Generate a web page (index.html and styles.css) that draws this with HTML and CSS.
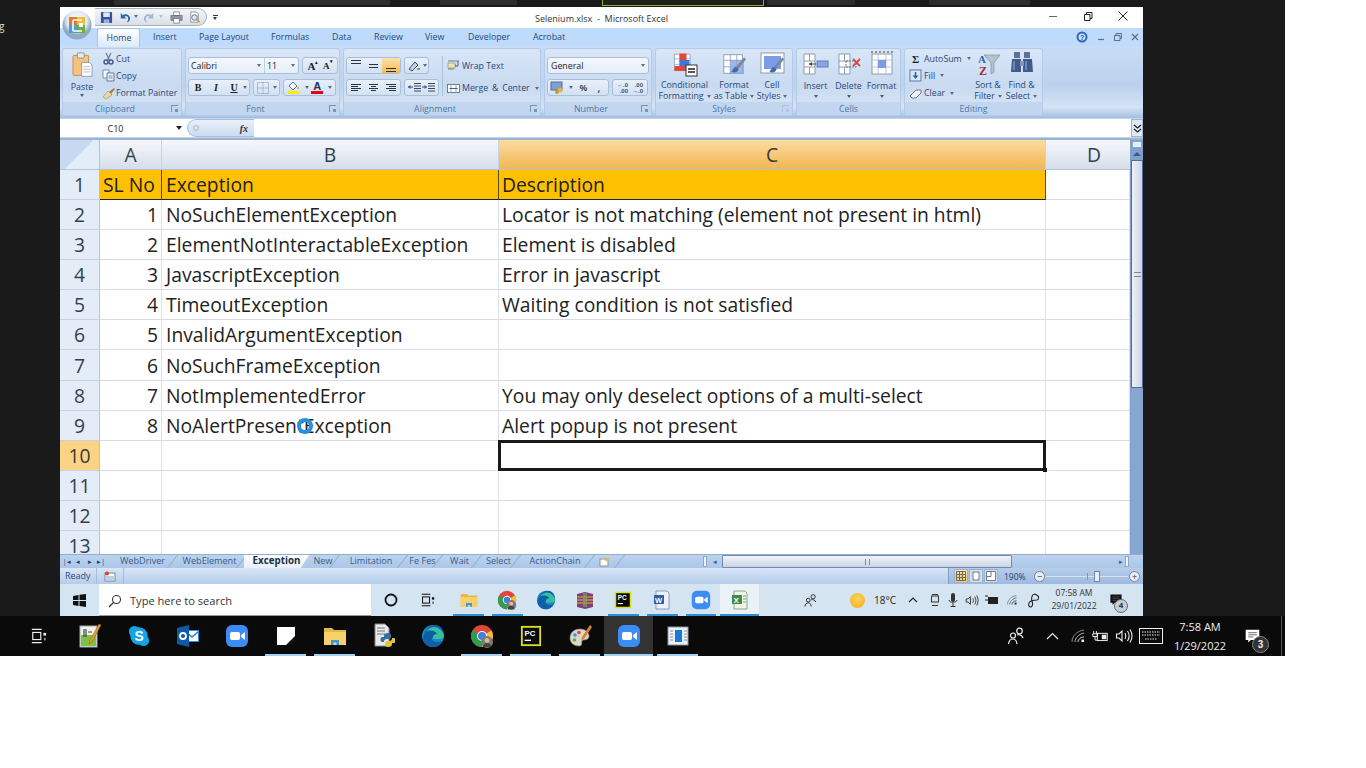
FILE: index.html
```html
<!DOCTYPE html>
<html lang="en">
<head>
<meta charset="utf-8">
<title>Selenium.xlsx - Microsoft Excel</title>
<link rel="stylesheet" href="styles.css">
</head>
<body>
<svg class="sprite" aria-hidden="true">
  <symbol id="zoom" viewBox="0 0 24 24"><rect x="1" y="1" width="22" height="22" rx="6" fill="#3b8cf5"/><rect x="5" y="8" width="10" height="8" rx="2" fill="#fff"/><path d="M16 11l4-3v8l-4-3z" fill="#fff"/></symbol>
  <symbol id="chrome" viewBox="0 0 24 24"><circle cx="12" cy="12" r="11" fill="#e0483a"/><path d="M12 12L2.500 6.500A11 11 0 0 0 12 23z" fill="#2f9e4a"/><path d="M12 12l9.500-5.500A11 11 0 0 1 12 23z" fill="#f5c22e"/><circle cx="12" cy="12" r="5" fill="#fff"/><circle cx="12" cy="12" r="4" fill="#3f7fe0"/><circle cx="17" cy="18" r="6" fill="#7d7a75"/><circle cx="17" cy="16.500" r="2.400" fill="#d9b8a0"/><path d="M13 23c0-3 2-4 4-4s4 1 4 4z" fill="#444"/></symbol>
  <symbol id="edge" viewBox="0 0 24 24"><circle cx="12" cy="12" r="11" fill="#1d86c9"/><path d="M2 14C3 6 9 1 14 1c5 0 9 4 9 10 0 2-1 3-3 3H11c0 3 3 4 6 4 2 0 3-1 4-1-2 4-5 6-9 6C6 23 2 19 2 14z" fill="#0e5fa8"/><path d="M5 8c3-5 8-6 12-4 4 2 6 6 6 8 0 2-2 3-4 3h-7c-1 0 0-1 0-2 0-2 2-3 4-3-1-3-7-5-11-2z" fill="#35c1a0"/></symbol>
  <symbol id="folder" viewBox="0 0 24 24"><path d="M1 4h8l2 2h12v15H1z" fill="#e6b84a"/><rect x="1" y="8" width="22" height="13" fill="#f7d26b"/><path d="M8 21v-5h8v5h-2.500v-2.500h-3V21z" fill="#3a96dd"/></symbol>
  <symbol id="pycharm" viewBox="0 0 24 24"><rect x="1" y="1" width="22" height="22" fill="#d8e021"/><rect x="3" y="3" width="18" height="18" fill="#0b0b0b"/><text x="5" y="12" font-size="8.500" font-weight="700" fill="#fff" font-family="Liberation Sans, sans-serif">PC</text><rect x="5" y="16" width="7" height="1.500" fill="#fff"/></symbol>
  <symbol id="people" viewBox="0 0 20 20"><g fill="none" stroke="currentColor" stroke-width="1.200"><circle cx="7" cy="9.500" r="2.500"/><path d="M2.500 18c.4-3 2-5 4.500-5 2 0 3.500 1.500 4 5"/><circle cx="13.500" cy="5" r="2.800"/><path d="M11 9c2-.5 5 0 6 3"/></g></symbol>
  <symbol id="wifi" viewBox="0 0 16 16"><g fill="none" stroke="currentColor"><path d="M2 14C2 8 7 3 14 2" opacity=".55"/><path d="M5 14c0-4 4-8 9-9" opacity=".75"/><path d="M8 14c0-2 2-5 6-5"/></g><rect x="11.500" y="11.500" width="2.500" height="2.500" fill="currentColor"/></symbol>
  <symbol id="speaker" viewBox="0 0 18 16"><g fill="none" stroke="currentColor" stroke-width="1.100"><path d="M1.500 6v4h2.500l3 3V3L4 6z"/><path d="M10 5c1 2 1 4 0 6M12.500 3c2 3 2 7 0 10M15 1.500c2.500 4 2.500 9 0 13"/></g></symbol>
  <symbol id="battery" viewBox="0 0 20 14"><g fill="none" stroke="currentColor" stroke-width="1.100"><rect x="7" y="3.500" width="11" height="8"/><path d="M3 1v3M6 1v3M2 4h5v3H2zM4.500 7v4h3"/></g><rect x="12" y="5" width="5" height="5" fill="currentColor"/></symbol>
  <symbol id="notif" viewBox="0 0 20 20"><path d="M2 2h16v12H8l-3 3v-3H2z" fill="currentColor"/><path d="M5 5.500h10M5 8h10M5 10.500h6" stroke="#555" fill="none"/></symbol>
  <symbol id="taskview" viewBox="0 0 18 18"><g fill="none" stroke="currentColor" stroke-width="1.300"><path d="M1 1.500h11M1 16.500h11"/><rect x="2" y="5" width="9" height="8"/></g><rect x="14" y="5.500" width="3" height="3" fill="currentColor"/><rect x="14.500" y="11" width="2" height="3" fill="currentColor" opacity=".6"/></symbol>
  <symbol id="grid3" viewBox="0 0 28 26"><g fill="#fff" stroke="#8d9cae"><rect x="3" y="3" width="20" height="20"/></g><path d="M3 9h20M3 16h20M10 3v20M17 3v20" stroke="#9aa8ba" fill="none"/></symbol>
  <symbol id="brush" viewBox="0 0 28 26"><path d="M25 6l-9 10 2 3 9-11z" fill="#7b879a"/><path d="M16 16c-3 1-3 4-5 5 3 2 7 1 8-2z" fill="#3f6bb5"/></symbol>
</svg>

<div class="screen">
  <div class="topstrip">
    <span class="ttab t1"></span><span class="ttab t2"></span><span class="ttab t3"></span><span class="ttab t4"></span><span class="ttab t5"></span><span class="ttab t6"></span>
  </div>
  <div class="middle">
    <div class="gutter"><span class="gutter-g">g</span></div>
    <div class="window">
      <div class="office">
        <svg viewBox="0 0 30 30" width="30" height="30"><defs><radialGradient id="orb" cx=".5" cy=".35"><stop offset="0" stop-color="#fff"/><stop offset=".7" stop-color="#dfe9f5"/><stop offset="1" stop-color="#93a8c4"/></radialGradient></defs><circle cx="15" cy="15" r="14.500" fill="url(#orb)"/><path d="M7 7h8v8H7z" fill="#e8792b"/><path d="M15 7h8v8h-8z" fill="#e9c13f"/><path d="M7 15h8v8H7z" fill="#4e9fd1"/><path d="M15 15h8v8h-8z" fill="#6fae3e"/><path d="M11 10h9M11 10v11M11 21h9" stroke="#fff" stroke-width="1.600" fill="none"/><rect x="17" y="13" width="4" height="4" fill="#fff"/></svg>
      </div>
      <div class="qat">
        <svg class="qi" viewBox="0 0 14 14"><rect x="1" y="1" width="12" height="12" rx="1" fill="#3c4f9e"/><rect x="3.500" y="1.500" width="7" height="5" fill="#dfe7f5"/><rect x="4" y="9" width="6" height="4" fill="#9eb2d8"/></svg>
        <svg class="qi" viewBox="0 0 14 14"><path d="M3 2v6h6L7 6c2-1.500 4 0 4 2.500 0 1.500-1 3-2 3.500 3 0 4-2 4-4 0-4-5-6-8-3.500z" fill="#2f64b3"/></svg>
        <span class="qdrop"></span>
        <svg class="qi" viewBox="0 0 14 14"><path d="M11 2v6H5l2-2c-2-1.500-4 0-4 2.500 0 1.500 1 3 2 3.500-3 0-4-2-4-4 0-4 5-6 8-3.500z" fill="#9fb6d1"/></svg>
        <span class="qdrop pale"></span>
        <svg class="qi" viewBox="0 0 14 14"><rect x="4" y="1" width="6" height="4" fill="#fff" stroke="#777" stroke-width=".8"/><rect x="1" y="5" width="12" height="5" fill="#8e99a8" stroke="#555" stroke-width=".6"/><rect x="4" y="8" width="6" height="5" fill="#fff" stroke="#777" stroke-width=".8"/></svg>
        <svg class="qi" viewBox="0 0 14 14"><path d="M3 1h6l2 2v9H3z" fill="#fff" stroke="#777" stroke-width=".8"/><circle cx="7" cy="7" r="3" fill="#dfe7f5" stroke="#5a6d8c"/><path d="M9 9l3.500 3" stroke="#c99c2e" stroke-width="1.500"/></svg>
      </div>
      <span class="qat-more"></span>

      <div class="titlebar">
        <span class="title">Selenium.xlsx&nbsp; - &nbsp;Microsoft Excel</span>
        <div class="wctl">
          <svg width="10" height="10" viewBox="0 0 10 10"><path d="M1 5.500h8" stroke="#666"/></svg>
          <svg width="10" height="10" viewBox="0 0 10 10"><path d="M1.500 3.500h5.500v6h-5.500zM3.500 3.500v-2h5.500v6h-2" fill="none" stroke="#222"/></svg>
          <svg width="10" height="10" viewBox="0 0 10 10"><path d="M.5.500l9 9M9.500.500l-9 9" stroke="#222"/></svg>
        </div>
      </div>

      <div class="tabs">
        <span class="rtab active">Home</span>
        <span class="rtab w-insert">Insert</span>
        <span class="rtab w-page">Page Layout</span>
        <span class="rtab w-formulas">Formulas</span>
        <span class="rtab w-data">Data</span>
        <span class="rtab w-review">Review</span>
        <span class="rtab w-view">View</span>
        <span class="rtab w-dev">Developer</span>
        <span class="rtab w-acro">Acrobat</span>
        <div class="mdi">
          <svg width="12" height="12" viewBox="0 0 12 12"><circle cx="6" cy="6" r="5.500" fill="#2a67c4"/><circle cx="6" cy="6" r="3.500" fill="#cfe2fb"/><text x="4" y="8.500" font-size="7" font-weight="700" fill="#1d4f9e" font-family="Liberation Sans, sans-serif">?</text></svg>
          <svg width="8" height="8" viewBox="0 0 8 8"><path d="M1 6.500h6" stroke="#5d6f88" stroke-width="1.200"/></svg>
          <svg width="8" height="8" viewBox="0 0 8 8"><path d="M.5 2.500h5.500v5h-5.500z M2 2.500v-2h5.500v5h-1.500" fill="none" stroke="#5d6f88"/></svg>
          <svg width="8" height="8" viewBox="0 0 8 8"><path d="M1 1l6 6M7 1l-6 6" stroke="#5d6f88" stroke-width="1.300"/></svg>
        </div>
      </div>

      <div class="ribbon">
        <section class="group g-clip">
          <div class="gbody">
            <div class="big paste">
              <svg width="21" height="26" viewBox="0 0 24 30"><rect x="1" y="4" width="18" height="23" rx="1" fill="#f4c47f" stroke="#b98a4d"/><rect x="6" y="1" width="8" height="6" rx="1" fill="#e9e9e9" stroke="#8a8a8a"/><path d="M11 12h9l3 3v13H11z" fill="#fff" stroke="#8894a8"/><path d="M13 17h8M13 20h8M13 23h8" stroke="#aab4c4"/></svg>
              <span>Paste</span><i class="caret"></i>
            </div>
            <div class="smalls">
              <div class="sm"><svg width="13" height="13" viewBox="0 0 13 13"><path d="M4 1l3.500 7M9 1L5.500 8" stroke="#6c7786" stroke-width="1.200"/><circle cx="4" cy="10" r="2" fill="none" stroke="#3e5a85" stroke-width="1.400"/><circle cx="9" cy="10" r="2" fill="none" stroke="#3e5a85" stroke-width="1.400"/></svg><span>Cut</span></div>
              <div class="sm"><svg width="13" height="13" viewBox="0 0 13 13"><path d="M1 1h6v8H1z" fill="#fff" stroke="#7d8ca3"/><path d="M5 4h7v8H5z" fill="#e9eff8" stroke="#5d7aa6"/><path d="M6.500 7h4M6.500 9h4" stroke="#7d8ca3"/></svg><span>Copy</span></div>
              <div class="sm"><svg width="13" height="13" viewBox="0 0 13 13"><path d="M7 5l5-4 1 1-4 5z" fill="#a77c3e"/><path d="M1 10l5-6 4 4-6 4z" fill="#eadc9a" stroke="#8e8b6d" stroke-width=".6"/></svg><span>Format Painter</span></div>
            </div>
          </div>
          <div class="glabel pad">Clipboard<i class="launcher"></i></div>
        </section>

        <section class="group g-font">
          <div class="gbody rows">
            <div class="crow">
              <div class="box combo"><span class="cb-font">Calibri<i class="cdrop"></i></span><span class="cb-size">11<i class="cdrop"></i></span></div>
              <div class="box btns gs"><b class="glyph serif">A<sup>▴</sup></b><b class="glyph serif small">A<sup>▾</sup></b></div>
            </div>
            <div class="crow">
              <div class="box btns biu"><b class="glyph serif">B</b><i class="glyph serif it">I</i><u class="glyph serif">U</u><i class="cdrop"></i></div>
              <div class="box btns bord"><svg width="12" height="12" viewBox="0 0 12 12"><path d="M.5.500h11v11H.5zM.5 6h11M6 .500v11" fill="none" stroke="#8391a5" stroke-dasharray="1 1"/></svg><i class="cdrop"></i></div>
              <div class="box btns col">
                <span class="swatch"><svg width="13" height="10" viewBox="0 0 13 10"><path d="M2 5l4-4 4 4-4 4z" fill="#fff" stroke="#5c6b80"/><path d="M11 5c1 2 1 3 0 3s-1-1 0-3z" fill="#d68a26"/></svg><i class="bar yellow"></i></span><i class="cdrop"></i>
                <span class="swatch"><b class="glyph a">A</b><i class="bar red"></i></span><i class="cdrop"></i>
              </div>
            </div>
          </div>
          <div class="glabel pad">Font<i class="launcher"></i></div>
        </section>

        <section class="group g-align">
          <div class="gbody splitrow">
            <div class="rows">
              <div class="crow">
                <div class="box btns al3">
                  <span class="lines top"><i></i><i></i></span><span class="lines mid"><i></i><i></i></span><span class="lines bot on"><i></i><i></i></span>
                </div>
                <div class="box btns orient"><svg width="13" height="12" viewBox="0 0 13 12"><path d="M2 9l6-7 3 3-6 6z" fill="#c7d3e4" stroke="#404a5a"/><path d="M10 9h3" stroke="#404a5a"/></svg><i class="cdrop"></i></div>
              </div>
              <div class="crow">
                <div class="box btns al3">
                  <span class="lines lft"><i></i><i></i><i></i><i></i></span><span class="lines ctr"><i></i><i></i><i></i><i></i></span><span class="lines rgt"><i></i><i></i><i></i><i></i></span>
                </div>
                <div class="box btns indent">
                  <svg width="13" height="11" viewBox="0 0 13 11"><path d="M6 1.500h7M6 4h7M6 6.500h7M6 9h7M0 5h5" stroke="#38445a"/><path d="M0 5l2.500-2v4z" fill="#2f64b3"/></svg>
                  <svg width="13" height="11" viewBox="0 0 13 11"><path d="M6 1.500h7M6 4h7M6 6.500h7M6 9h7M0 5h5" stroke="#38445a"/><path d="M5 5L2.500 3v4z" fill="#2f64b3"/></svg>
                </div>
              </div>
            </div>
            <div class="vsep"></div>
            <div class="wraps">
              <div class="sm"><svg width="13" height="13" viewBox="0 0 13 13"><path d="M1 2h11M1 6h8M1 10h6" stroke="#6f7b8d"/><rect x="1" y="4" width="7" height="5" fill="#efe2ad" stroke="#8c8a70" stroke-width=".6"/><path d="M11 2v5H8" fill="none" stroke="#2f64b3"/></svg><span>Wrap Text</span></div>
              <div class="sm"><svg width="13" height="13" viewBox="0 0 13 13"><rect x=".5" y="2.500" width="12" height="8" fill="#fff" stroke="#6f7b8d"/><path d="M4 2.500v8M9 2.500v8" stroke="#9aa6b8"/><path d="M2.500 6.500H10.500" stroke="#2f64b3"/></svg><span class="merge">Merge &amp; Center</span><i class="cdrop"></i></div>
            </div>
          </div>
          <div class="glabel pad">Alignment<i class="launcher"></i></div>
        </section>

        <section class="group g-num">
          <div class="gbody rows">
            <div class="crow"><div class="box combo general"><span>General<i class="cdrop"></i></span></div></div>
            <div class="crow">
              <div class="box btns acct"><svg width="16" height="13" viewBox="0 0 16 13"><rect x="1" y="1" width="11" height="8" fill="#7f9fd3" stroke="#4d6da3"/><circle cx="10" cy="9" r="2.500" fill="#e2b33c"/><circle cx="7" cy="11" r="2" fill="#d39a28"/></svg><i class="cdrop"></i><span class="b-sep pct">%</span><span class="b-sep comma">,</span></div>
              <div class="box btns dec"><span class="dd">←.0<br>.00</span><span class="dd">.00<br>→.0</span></div>
            </div>
          </div>
          <div class="glabel pad">Number<i class="launcher"></i></div>
        </section>

        <section class="group g-styles">
          <div class="gbody bigs">
            <div class="big w-cond">
              <svg width="26" height="26" viewBox="0 0 26 26"><use href="#grid3" width="22" height="22" x="0" y="0"/><rect x="7.500" y="2.500" width="7" height="8" fill="#e0483a"/><rect x="7.500" y="9" width="10" height="6" fill="#3f78d8"/><rect x="2.500" y="15" width="12" height="5" fill="#e0483a"/><rect x="14" y="14" width="11" height="11" fill="#fff" stroke="#333"/><path d="M16 18h7M16 21h7" stroke="#222" stroke-width="1.400"/></svg>
              <span>Conditional<br>Formatting<i class="cdrop"></i></span>
            </div>
            <div class="big w-ft">
              <svg width="26" height="26" viewBox="0 0 26 26"><use href="#grid3" width="26" height="26"/><rect x="9" y="9" width="14" height="14" fill="#8aa5e0" opacity=".8"/><use href="#brush" width="26" height="26"/></svg>
              <span>Format<br>as Table<i class="cdrop"></i></span>
            </div>
            <div class="big w-cs">
              <svg width="26" height="26" viewBox="0 0 26 26"><rect x="2" y="2" width="23" height="20" fill="#fff" stroke="#8d9cae"/><rect x="5" y="5" width="17" height="13" fill="#7d9ce8"/><use href="#brush" width="26" height="26"/></svg>
              <span>Cell<br>Styles<i class="cdrop"></i></span>
            </div>
          </div>
          <div class="glabel">Styles<i class="launcher pale"></i></div>
        </section>

        <section class="group g-cells">
          <div class="gbody bigs">
            <div class="big w-cell">
              <svg width="26" height="26" viewBox="0 0 26 26"><path d="M1 3h11v20H1zM1 10h11M1 16h11M6.500 3v7M6.500 16v7" fill="#fff" stroke="#8d9cae"/><rect x="14" y="10" width="11" height="6" fill="#8aa5e0" stroke="#5f7fb8"/><path d="M13 13H6" stroke="#444"/><path d="M6 13l3-2v4z" fill="#444"/></svg>
              <span>Insert</span><i class="caret"></i>
            </div>
            <div class="big w-cell">
              <svg width="26" height="26" viewBox="0 0 26 26"><path d="M3 3h11v20H3zM3 10h11M3 16h11M8.500 3v7M8.500 16v7" fill="#fff" stroke="#8d9cae"/><path d="M10 10h10v6H10z" fill="none" stroke="#6d7a8c" stroke-dasharray="2 1"/><path d="M17 8l7 7M24 8l-7 7" stroke="#e0483a" stroke-width="1.800"/></svg>
              <span>Delete</span><i class="caret"></i>
            </div>
            <div class="big w-cell">
              <svg width="26" height="26" viewBox="0 0 26 26"><rect x="3" y="3" width="20" height="20" fill="#fff" stroke="#8d9cae"/><path d="M3 9h20M3 16h20M9 3v20M17 3v20" stroke="#bcc5d2"/><rect x="9" y="9" width="8" height="8" fill="#7d9ce8"/><path d="M2 1h22" stroke="#444" stroke-dasharray="2 2"/></svg>
              <span>Format</span><i class="caret"></i>
            </div>
          </div>
          <div class="glabel">Cells</div>
        </section>

        <section class="group g-edit">
          <div class="gbody">
            <div class="smalls wide">
              <div class="sm"><b class="sigma">Σ</b><span>AutoSum</span><i class="cdrop"></i></div>
              <div class="sm"><svg width="13" height="13" viewBox="0 0 13 13"><rect x="1" y="1" width="11" height="11" fill="#dbe6f7" stroke="#5d7aa6"/><path d="M6.500 3v4" stroke="#2f64b3" stroke-width="1.600"/><path d="M3.500 6.500h6l-3 3.500z" fill="#2f64b3"/></svg><span>Fill</span><i class="cdrop"></i></div>
              <div class="sm"><svg width="13" height="13" viewBox="0 0 13 13"><path d="M1 9l6-6h5v3l-5 5H3z" fill="#f3f3f3" stroke="#6f7b8d"/></svg><span>Clear</span><i class="cdrop"></i></div>
            </div>
            <div class="big w-sort">
              <svg width="26" height="26" viewBox="0 0 26 26"><path d="M9 4h16l-6 8v9l-3 2V12z" fill="#b9c1cc" stroke="#7b8796" stroke-width=".6"/><text x="3" y="12" font-size="11" font-weight="700" fill="#2f64b3" font-family="Liberation Serif, serif">A</text><text x="4" y="24" font-size="12" font-weight="700" fill="#9c3434" font-family="Liberation Serif, serif">Z</text></svg>
              <span>Sort &amp;<br>Filter<i class="cdrop"></i></span>
            </div>
            <div class="big w-find">
              <svg width="26" height="26" viewBox="0 0 26 26"><rect x="5" y="1" width="6" height="6" fill="#5d7196"/><rect x="15" y="1" width="6" height="6" fill="#5d7196"/><path d="M3 8h9v13H2zM14 8h9l1 13H14z" fill="#3f5b8c"/><rect x="11" y="10" width="4" height="5" fill="#8296ba"/><path d="M5 10v9M17 10v9" stroke="#9fb2d4"/></svg>
              <span>Find &amp;<br>Select<i class="cdrop"></i></span>
            </div>
          </div>
          <div class="glabel">Editing</div>
        </section>
      </div>

      <div class="formula">
        <div class="namebox"><span>C10</span><i class="nb-arrow"></i></div>
        <div class="fxbox"><i class="fx-dot"></i><em>fx</em></div>
        <div class="finput"></div>
        <div class="fexpand">
          <svg width="9" height="9" viewBox="0 0 9 9"><path d="M1 1l3.500 3L8 1M1 5l3.500 3L8 5" fill="none" stroke="#222" stroke-width="1.300"/></svg>
        </div>
      </div>

      <div class="sheetwrap">
        <div class="sheet">
          <div class="corner"></div><div class="ch">A</div><div class="ch">B</div><div class="ch sel">C</div><div class="ch d">D</div>

          <div class="rh">1</div><div class="c hd">SL No</div><div class="c hd b">Exception</div><div class="c hd">Description</div><div class="c"></div>
          <div class="rh">2</div><div class="c num">1</div><div class="c b">NoSuchElementException</div><div class="c">Locator is not matching (element not present in html)</div><div class="c"></div>
          <div class="rh">3</div><div class="c num">2</div><div class="c b">ElementNotInteractableException</div><div class="c">Element is disabled</div><div class="c"></div>
          <div class="rh">4</div><div class="c num">3</div><div class="c b">JavascriptException</div><div class="c">Error in javascript</div><div class="c"></div>
          <div class="rh">5</div><div class="c num">4</div><div class="c b">TimeoutException</div><div class="c">Waiting condition is not satisfied</div><div class="c"></div>
          <div class="rh">6</div><div class="c num">5</div><div class="c b">InvalidArgumentException</div><div class="c"></div><div class="c"></div>
          <div class="rh">7</div><div class="c num">6</div><div class="c b">NoSuchFrameException</div><div class="c"></div><div class="c"></div>
          <div class="rh">8</div><div class="c num">7</div><div class="c b">NotImplementedError</div><div class="c">You may only deselect options of a multi-select</div><div class="c"></div>
          <div class="rh">9</div><div class="c num">8</div><div class="c b">NoAlertPresentException</div><div class="c">Alert popup is not present</div><div class="c"></div>
          <div class="rh sel">10</div><div class="c"></div><div class="c"></div><div class="c active"></div><div class="c"></div>
          <div class="rh">11</div><div class="c"></div><div class="c"></div><div class="c"></div><div class="c"></div>
          <div class="rh">12</div><div class="c"></div><div class="c"></div><div class="c"></div><div class="c"></div>
          <div class="rh">13</div><div class="c"></div><div class="c"></div><div class="c"></div><div class="c"></div>
          <span class="spinner"></span>
        </div>
        <div class="vscroll">
          <span class="vs-split"></span>
          <span class="vs-up"></span>
          <span class="vs-thumb"><i></i></span>
          <span class="vs-track"></span>
        </div>
      </div>

      <div class="sheetbar">
        <div class="nav"><span>|◂</span><span>◂</span><span>▸</span><span>▸|</span></div>
        <span class="stab s-wd">WebDriver</span>
        <span class="stab s-we">WebElement</span>
        <span class="stab s-ex">Exception</span>
        <span class="stab s-ne">New</span>
        <span class="stab s-li">Limitation</span>
        <span class="stab s-fe">Fe Fes</span>
        <span class="stab s-wa">Wait</span>
        <span class="stab s-se">Select</span>
        <span class="stab s-ac">ActionChain</span>
        <span class="stab s-add"><svg width="11" height="10" viewBox="0 0 11 10"><rect x="1" y="2" width="8" height="7" fill="#fff" stroke="#8a94a3"/><circle cx="8" cy="2.500" r="2" fill="#e9b93f"/></svg></span>
        <div class="hscroll">
          <span class="hs-split"></span>
          <span class="hs-arrow">◂</span>
          <span class="hs-thumb"><i></i></span>
          <span class="hs-arrow right">▸</span>
          <span class="hs-split"></span>
        </div>
      </div>

      <div class="status">
        <span class="ready">Ready</span>
        <svg class="macro" width="12" height="11" viewBox="0 0 12 11"><rect x="1" y="2" width="10" height="8" fill="#fff" stroke="#7d8ca3"/><path d="M2 6h8M2 8h8" stroke="#8aa0bf"/><circle cx="3" cy="2.500" r="2" fill="#d8432f"/></svg>
        <span class="st-sep"></span>
        <div class="st-right">
          <div class="views">
            <span class="on"><svg width="10" height="10" viewBox="0 0 10 10"><path d="M.5.500h9v9h-9zM.5 3.500h9M.5 6.500h9M3.500.500v9M6.500.500v9" fill="none" stroke="#6b6b60"/></svg></span>
            <span><svg width="10" height="10" viewBox="0 0 10 10"><rect x="2" y="1" width="6" height="8" fill="#fff" stroke="#6b7a90"/></svg></span>
            <span><svg width="10" height="10" viewBox="0 0 10 10"><path d="M.5.500h9v9h-9zM5 .500v5H.5" fill="#fff" stroke="#6b7a90"/></svg></span>
          </div>
          <span class="pct190">190%</span>
          <span class="zoomb">−</span>
          <span class="slider"><i class="tick"></i><i class="knob"></i></span>
          <span class="zoomb">+</span>
        </div>
      </div>

      <div class="itask">
        <div class="start"><svg width="13" height="13" viewBox="0 0 13 13"><path d="M0 2l5.500-1v5H0zM6.500.800L13 0v6H6.500zM0 7h5.500v5L0 11zM6.500 7H13v6l-6.500-1z" fill="#111"/></svg></div>
        <div class="isearch"><svg width="14" height="14" viewBox="0 0 14 14"><circle cx="8.500" cy="5.500" r="4" fill="none" stroke="#333" stroke-width="1.100"/><path d="M5.500 8.500L1 13" stroke="#333" stroke-width="1.200"/></svg><span>Type here to search</span></div>
        <div class="iapps">
          <span class="ia"><svg width="14" height="14" viewBox="0 0 14 14"><circle cx="7" cy="7" r="5.500" fill="none" stroke="#111" stroke-width="1.800"/></svg></span>
          <span class="ia tvi"><svg class="ink" width="14" height="14"><use href="#taskview"/></svg></span>
          <span class="ia run"><svg width="18" height="18"><use href="#folder"/></svg></span>
          <span class="ia run"><svg width="20" height="20"><use href="#chrome"/></svg></span>
          <span class="ia"><svg width="20" height="20"><use href="#edge"/></svg></span>
          <span class="ia"><svg width="20" height="18" viewBox="0 0 20 18"><path d="M2 3l8-2 8 2v13l-8 2-8-2z" fill="#7e3f7a"/><path d="M2 6h16M2 9h16M2 12h16" stroke="#e0b43b"/><rect x="8" y="2" width="4" height="14" fill="#7ab34a" opacity=".6"/></svg></span>
          <span class="ia run"><svg width="18" height="18"><use href="#pycharm"/></svg></span>
          <span class="ia run"><svg width="18" height="20" viewBox="0 0 18 20"><path d="M3 1h11l2 2v16H3z" fill="#eef2f8" stroke="#8d9cae"/><rect x="1" y="5" width="10" height="9" fill="#2c5fae"/><text x="2" y="12.500" font-size="7.500" font-weight="700" fill="#fff" font-family="Liberation Sans, sans-serif">W</text></svg></span>
          <span class="ia run"><svg width="20" height="20"><use href="#zoom"/></svg></span>
          <span class="ia run cur"><svg width="18" height="20" viewBox="0 0 18 20"><path d="M3 1h11l2 2v16H3z" fill="#eef5e8" stroke="#8da58d"/><rect x="1" y="5" width="10" height="9" fill="#3f8b45"/><text x="2.500" y="12.500" font-size="8" font-weight="700" fill="#fff" font-family="Liberation Sans, sans-serif">X</text><path d="M12 6h3M12 9h3M12 12h3" stroke="#6fae6f"/></svg></span>
        </div>
        <div class="itray">
          <svg class="p" width="15" height="15"><use href="#people"/></svg>
          <span class="sun"></span>
          <span class="temp">18°C</span>
          <svg class="chev" width="10" height="6" viewBox="0 0 10 6"><path d="M1 5l4-4 4 4" fill="none" stroke="#222" stroke-width="1.100"/></svg>
          <svg class="m1" width="10" height="14" viewBox="0 0 10 14"><rect x="1.500" y="3" width="7" height="6" fill="none" stroke="#333"/><path d="M2 1.500h6M2 12.500h6" stroke="#333"/></svg>
          <svg class="m2" width="10" height="16" viewBox="0 0 10 16"><rect x="3" y="1" width="4" height="9" rx="2" fill="#333"/><path d="M1 8c0 3 8 3 8 0M5 11v3M2.500 14.500h5" stroke="#333" fill="none"/></svg>
          <svg class="m3" width="14" height="13"><use href="#speaker"/></svg>
          <svg class="m4" width="14" height="11" viewBox="0 0 14 11"><rect x="3" y="2" width="10" height="7" fill="#222"/><path d="M0 1h3M0 5h3" stroke="#222"/></svg>
          <svg class="m5" width="12" height="12"><use href="#wifi"/></svg>
          <svg class="m6" width="13" height="15" viewBox="0 0 13 15"><path d="M8 1C5 1 4 5 5 8s1 5-1 6c-2 0-3-2-2-4s5-3 8-3c2-1 2-3 1-4s-2-1-3-2z" fill="none" stroke="#222" stroke-width="1.100"/></svg>
          <div class="iclock"><span>07:58 AM</span><span>29/01/2022</span></div>
          <span class="inotif"><svg width="14" height="14"><use href="#notif"/></svg><b>4</b></span>
        </div>
      </div>
    </div>
  </div>

  <div class="taskbar">
    <span class="app tv"><svg width="16" height="16"><use href="#taskview"/></svg></span>
    <span class="app"><svg width="24" height="26" viewBox="0 0 24 26"><rect x="2" y="3" width="17" height="21" fill="#eef2e6" stroke="#9aa"/><rect x="3" y="12" width="15" height="11" fill="#7fc241"/><path d="M6 6v8M8 6v8M10 9h4" stroke="#444" stroke-width="1.200"/><path d="M21 1l2 1-9 17-3 2 1-4z" fill="#e8a22c" stroke="#7c5a1f" stroke-width=".5"/></svg></span>
    <span class="app"><svg width="22" height="22" viewBox="0 0 24 24"><circle cx="7" cy="7" r="6" fill="#12a5e8"/><circle cx="17" cy="17" r="6" fill="#12a5e8"/><circle cx="12" cy="12" r="9.500" fill="#12a5e8"/><text x="7" y="17" font-size="15" font-weight="700" fill="#fff" font-family="Liberation Sans, sans-serif">S</text></svg></span>
    <span class="app"><svg width="24" height="24" viewBox="0 0 24 24"><rect x="9" y="6" width="14" height="12" fill="#2a8ad4"/><path d="M10 7l6 5 6-5z" fill="#fff"/><path d="M10 9l6 5 6-5v8H10z" fill="#fff"/><path d="M1 4l12-3v22L1 20z" fill="#0f5aa8"/><circle cx="7" cy="12" r="3" fill="none" stroke="#fff" stroke-width="1.800"/></svg></span>
    <span class="app"><svg width="24" height="24"><use href="#zoom"/></svg></span>
    <span class="app run"><svg width="18" height="18" viewBox="0 0 18 18"><rect width="18" height="18" fill="#fff"/><path d="M18 9L9 18h9z" fill="#111"/></svg></span>
    <span class="app run"><svg width="24" height="24"><use href="#folder"/></svg></span>
    <span class="app"><svg width="22" height="26" viewBox="0 0 22 26"><path d="M2 1h10l4 4v18H2z" fill="#e9e9e9" stroke="#888"/><path d="M4 5h8M4 8h8M4 11h8" stroke="#777"/><path d="M15 10c-3 0-4 1-4 3v1h-2c-2 0-2 5 0 5h2c0-2 1-3 3-3h2c1 0 2-1 2-2v-2c0-1-1-2-3-2z" fill="#356f9f"/><path d="M15 24c3 0 4-1 4-3v-1h2c2 0 2-5 0-5h-2c0 2-1 3-3 3h-2c-1 0-2 1-2 2v2c0 1 1 2 3 2z" fill="#e7c13c"/></svg></span>
    <span class="app"><svg width="24" height="24"><use href="#edge"/></svg></span>
    <span class="app run"><svg width="24" height="24"><use href="#chrome"/></svg></span>
    <span class="app run"><svg width="22" height="22"><use href="#pycharm"/></svg></span>
    <span class="app run"><svg width="24" height="24" viewBox="0 0 24 24"><path d="M2 14C2 8 7 5 12 5s9 3 9 7c0 5-6 3-7 5s1 5-3 5c-5 0-9-3-9-8z" fill="#dcd7c8" stroke="#8d8a7c" stroke-width=".6"/><circle cx="7" cy="11" r="1.800" fill="#3b8cf5"/><circle cx="11" cy="8.500" r="1.800" fill="#e0483a"/><circle cx="6.500" cy="16" r="1.800" fill="#5dae48"/><path d="M22 1l2 2-8 12-3 2 1-4z" fill="#d8862c"/></svg></span>
    <span class="app cur run"><svg width="24" height="24"><use href="#zoom"/></svg></span>
    <span class="app run"><svg width="22" height="20" viewBox="0 0 22 20"><rect x="1" y="1" width="20" height="18" fill="#eceff4" stroke="#8a94a3"/><rect x="8" y="4" width="7" height="12" fill="#1a78d8"/><path d="M3 5h3M3 8h3M3 11h3M3 14h3M17 5h3M17 8h3M17 11h3M17 14h3" stroke="#8a94a3"/></svg></span>
    <div class="tray">
      <svg class="t-p" width="20" height="20"><use href="#people"/></svg>
      <svg class="t-c" width="13" height="8" viewBox="0 0 13 8"><path d="M1 7l5.500-5.500L12 7" fill="none" stroke="#eee" stroke-width="1.200"/></svg>
      <svg class="t-w" width="16" height="16"><use href="#wifi"/></svg>
      <svg class="t-b" width="18" height="13"><use href="#battery"/></svg>
      <svg class="t-s" width="18" height="16"><use href="#speaker"/></svg>
      <svg class="t-k" width="24" height="16" viewBox="0 0 24 16"><rect x=".5" y=".5" width="23" height="15" fill="none" stroke="#eee"/><path d="M3 4h18M3 7h18M6 11h12" stroke="#eee" stroke-dasharray="1.500 1"/></svg>
      <div class="clock"><span>7:58 AM</span><span>1/29/2022</span></div>
      <span class="notif"><svg width="17" height="17"><use href="#notif"/></svg><b>3</b></span>
    </div>
    <span class="edge-line"></span>
  </div>
</div>
</body>
</html>
```

FILE: styles.css
```css
* { box-sizing: border-box; }
html, body { margin: 0; padding: 0; }
body { width: 1366px; height: 768px; background: #fff; overflow: hidden; font-family: "Open Sans", "Liberation Sans", sans-serif; }
i { font-style: normal; }
.sprite { display: none; }
svg { display: block; flex: none; }

.screen { width: 1285px; height: 656px; background: #1a1a1a; display: flex; flex-direction: column; }

.topstrip { height: 7px; display: flex; flex: none; }
.ttab { height: 5px; background: #2c2c2c; display: block; }
.t1 { width: 163px; margin-left: 114px; }
.t2 { width: 113px; }
.t3 { width: 77px; margin-left: 50px; }
.t4 { width: 162px; margin-left: 85px; height: 6px; background: #1f1f1f; border: solid #86b51e; border-width: 0 1px 1px; }
.t5 { width: 88px; margin-left: 3px; }
.t6 { width: 101px; margin-left: 74px; }

.middle { display: flex; height: 609px; flex: none; }
.gutter { width: 60px; color: #ddd; font-size: 10px; padding-top: 12px; }
.gutter-g { display: block; margin-left: -1px; }

.window { width: 1083px; display: flex; flex-direction: column; position: relative; background: #bfd5ef; font-size: 8.800px; color: #28487c; }

.office { position: absolute; left: 2px; top: 3px; z-index: 3; width: 30px; height: 30px; }
.qat { position: absolute; left: 35px; top: 1px; z-index: 2; width: 112px; height: 18px; padding-left: 5px; display: flex; align-items: center; gap: 5px; border: 1px solid #a8b4c4; border-left: 0; border-radius: 0 10px 10px 0; background: linear-gradient(#f4f6f9, #d8dfe8); }
.qi { width: 13px; height: 13px; }
.qdrop { width: 0; height: 0; margin: 0 0 0 -2px; border: 2px solid transparent; border-top: 3px solid #5b6f8c; }
.qdrop.pale { border-top-color: #b6c3d4; margin-right: 2px; }
.qat-more { position: absolute; left: 153px; top: 8px; width: 5px; height: 4px; z-index: 2; border-top: 1px solid #335; }
.qat-more::after { content: ""; display: block; margin-top: 1px; border: 2.500px solid transparent; border-top: 3px solid #335; height: 0; width: 0; }

.titlebar { height: 21px; flex: none; background: #fff; display: flex; align-items: center; justify-content: center; position: relative; padding-top: 1px; }
.title { font-size: 9px; color: #333; }
.wctl { position: absolute; right: 15px; top: 4px; display: flex; gap: 25px; }

.tabs { height: 18px; flex: none; display: flex; align-items: center; padding-left: 37px; background: #bfdbfb; position: relative; }
.rtab { display: block; line-height: 20px; color: #22487f; flex: none; }
.rtab.active { width: 43px; height: 19px; margin-top: 1px; padding-left: 1px; text-align: center; line-height: 18px; background: linear-gradient(#fff, #dce9f8); border: 1px solid #a7c3e6; border-bottom: 0; border-radius: 3px 3px 0 0; z-index: 1; }
.w-insert { margin-left: 13px; width: 46px; }
.w-page { width: 72px; }
.w-formulas { width: 61px; }
.w-data { width: 42px; }
.w-review { width: 51px; }
.w-view { width: 43px; }
.w-dev { width: 65px; }
.mdi { position: absolute; left: 1016px; top: 3px; display: flex; align-items: center; gap: 9px; }

.ribbon { height: 72px; flex: none; display: flex; gap: 3px; padding: 2px 0 0 2px; background: linear-gradient(#c9dcf5, #bcd2ec 55%, #d4e3f5 85%, #a5bfdf); }
.group { height: 68px; display: flex; flex-direction: column; border: 1px solid #b3cbe8; border-radius: 3px; background: linear-gradient(#d9e6f8, #c9daf0 55%, #dbe7f6); overflow: hidden; }
.g-clip { width: 120px; } .g-font { width: 155px; } .g-align { width: 198px; } .g-num { width: 108px; }
.g-styles { width: 138px; } .g-cells { width: 105px; } .g-edit { width: 139px; }
.gbody { flex: 1; display: flex; min-height: 0; }
.glabel { height: 13px; flex: none; text-align: center; line-height: 15px; color: #4f76a8; background: #c2d7ef; position: relative; }
.glabel.pad { padding-right: 14px; }
.launcher { position: absolute; right: 3px; top: 3px; width: 7px; height: 7px; border: 1px solid #7f92ab; border-width: 1px 0 0 1px; }
.launcher::after { content: ""; position: absolute; right: 0; bottom: 0; width: 3px; height: 3px; background: #7f92ab; }
.launcher.pale { opacity: .25; }

.caret { display: block; width: 0; height: 0; border: 2.500px solid transparent; border-top: 3px solid #4c5d78; margin-top: 1px; }
.cdrop { display: inline-block; width: 0; height: 0; border: 2.500px solid transparent; border-top: 3px solid #5d6c82; border-bottom: 0; vertical-align: middle; margin-left: 3px; flex: none; }

.big { display: flex; flex-direction: column; align-items: center; text-align: center; line-height: 11px; flex: none; padding-top: 2px; color: #28487c; white-space: nowrap; }
.paste { width: 36px; margin-left: 1px; padding-top: 3px; }
.paste span { margin-top: 4px; }

.smalls { display: flex; flex-direction: column; padding: 1px 0 0 2px; width: 78px; }
.smalls .sm { gap: 1px; }
.smalls.wide { width: 66px; padding-left: 4px; }
.smalls.wide .sm { gap: 2px; }
.sm { display: flex; align-items: center; height: 17.500px; gap: 3px; white-space: nowrap; }
.sigma { font: 700 11px "Liberation Serif", serif; color: #222; width: 13px; text-align: center; }

.rows { flex-direction: column; gap: 5px; padding: 8px 0 0 2px; display: flex; }
.crow { display: flex; gap: 3px; height: 17px; }
.box { height: 17px; border: 1px solid #a9bfd9; border-radius: 3px; background: linear-gradient(#e8f0fb, #d3e1f3); display: flex; align-items: center; color: #222; flex: none; }
.combo { background: linear-gradient(#f4f8fd, #e6eef9); }
.combo span { display: flex; align-items: center; justify-content: space-between; padding: 0 3px 0 2px; height: 100%; }
.cb-font { width: 76px; border-right: 1px solid #bed0e6; }
.cb-size { width: 33px; }
.general { width: 102px; }
.general span { width: 100%; padding: 0 3px; }
.btns { justify-content: space-around; padding: 0 2px; }
.glyph { font: 700 11px "Liberation Sans", sans-serif; color: #222; }
.serif { font-family: "Liberation Serif", serif; }
.small { font-size: 9px; }
.glyph sup { font-size: 5px; vertical-align: 6px; line-height: 0; }
.gs { width: 36px; }
.biu { width: 62px; padding: 0; justify-content: flex-start; }
.biu .glyph { font-size: 10px; width: 18px; text-align: center; display: block; }
.biu .it { font-style: italic; }
.biu .cdrop { margin-left: 0; }
.bord { width: 27px; justify-content: center; gap: 1px; }
.col { width: 53px; gap: 0; }
.swatch { display: flex; flex-direction: column; align-items: center; width: 14px; }
.bar { display: block; width: 12px; height: 3px; margin-top: 0; }
.yellow { background: #ffea00; }
.red { background: #e00; }
.glyph.a { font-size: 11px; line-height: 10px; color: #22345c; }

.splitrow { display: flex; }
.splitrow .rows { width: 96px; flex: none; }
.al3 { width: 55px; padding: 0; justify-content: flex-start; }
.lines { width: 18px; height: 15px; display: flex; flex-direction: column; justify-content: center; gap: 2px; padding: 0 4px; }
.lines i { display: block; height: 1px; background: #2a3342; }
.lines.top { justify-content: flex-start; padding-top: 2px; }
.lines.bot { justify-content: flex-end; padding-bottom: 1px; }
.lines.on { background: linear-gradient(#fde3a8, #f9b94e); }
.lines.lft i:nth-child(even) { margin-right: 3px; }
.lines.ctr i:nth-child(even) { margin: 0 2px; }
.lines.rgt i:nth-child(even) { margin-left: 3px; }
.lines.lft, .lines.ctr, .lines.rgt { gap: 1px; }
.orient { width: 25px; gap: 0; }
.indent { width: 35px; }
.vsep { width: 1px; height: 40px; margin: 7px 0 0 2px; background: #aec3dc; }
.wraps { padding: 8px 0 0 4px; display: flex; flex-direction: column; gap: 5px; }
.wraps .sm { gap: 2px; }
.merge { word-spacing: 1.500px; }

.acct { width: 62px; justify-content: flex-start; padding-left: 2px; }
.b-sep { display: block; text-align: center; font-weight: 600; color: #333; }
.pct { width: 19px; margin-left: 2px; font-size: 9px; }
.comma { width: 16px; font-size: 10px; line-height: 10px; }
.dec { width: 36px; }
.dd { font: 700 6px/6px "Liberation Sans", sans-serif; color: #3f5270; text-align: right; }

.bigs { display: flex; }
.g-styles .bigs { padding-left: 2px; }
.w-cond { width: 53px; }
.w-ft { width: 46px; }
.w-cs { width: 30px; }
.g-cells .bigs { padding-left: 2px; }
.w-cell { width: 33px; }
.w-cell span { margin-top: 1px; }
.w-cell .caret { margin-top: 3px; }
.w-sort { width: 34px; }
.w-find { width: 33px; }
.w-cond svg, .w-ft svg, .w-cs svg, .w-cell svg, .w-sort svg, .w-find svg { margin-bottom: 3px; }

.formula { height: 18px; margin-top: 1px; flex: none; display: flex; background: #fff; }
.namebox { width: 125px; display: flex; align-items: center; justify-content: center; position: relative; background: #fff; color: #222; font-size: 9px; padding-right: 14px; }
.nb-arrow { position: absolute; right: 3px; top: 7px; border: 3px solid transparent; border-top: 4px solid #222; }
.fxbox { width: 67px; margin-left: 2px; display: flex; align-items: center; justify-content: flex-end; padding-right: 6px; background: linear-gradient(#e9f0fa, #cbdcf1); border-radius: 9px 0 0 9px; border: 1px solid #aabfd8; border-width: 1px 0 1px 1px; position: relative; }
.fxbox em { font: italic 700 10px "Liberation Serif", serif; color: #333; }
.fx-dot { position: absolute; left: 5px; top: 5px; width: 6px; height: 6px; border-radius: 50%; border: 1px solid #aeb8c6; }
.finput { flex: 1; background: #fff; }
.fexpand { width: 12px; display: flex; align-items: center; justify-content: center; background: #dfe9f6; border: 1px solid #9fb5d2; }

.sheetwrap { height: 414px; margin-top: 3px; flex: none; display: flex; background: #fff; box-shadow: 0 -2px 0 #9db4cf; }
.sheet { width: 1070px; height: 414px; overflow: hidden; display: grid; grid-template-columns: 40px 62px 337px 547px 84px; grid-template-rows: repeat(7, 30px) 31px; grid-auto-rows: 30px; position: relative; font-size: 19.300px; color: #222; background: #fff; }
.corner { background: linear-gradient(135deg, #c7d9f1 50%, #e3edf9 50%); border-right: 1px solid #b1c4dc; border-bottom: 1px solid #b1c4dc; }
.ch { display: flex; align-items: center; justify-content: center; background: linear-gradient(#f5f7fb, #d6deeb); border-right: 1px solid #c7d2e2; border-bottom: 1px solid #b1c4dc; color: #333f4d; }
.ch.d { padding-left: 12px; border-right: 0; }
.ch.sel { background: linear-gradient(#fbdc9f, #f2b652); color: #3a3a36; }
.rh { display: flex; align-items: center; justify-content: center; background: #e4ecf7; border-right: 1px solid #b1c4dc; border-bottom: 1px solid #c7d2e2; color: #333f4d; }
.rh.sel { background: #fbd384; color: #3a3a36; }
.c { display: flex; align-items: center; padding-left: 3px; border-right: 1px solid #dbe0ea; border-bottom: 1px solid #d8dce6; white-space: nowrap; }
.c.b { padding-left: 4px; }
.c.num { justify-content: flex-end; padding: 0 3px 0 0; }
.c.hd { background: #ffc000; border-right: 1px solid #5d4a10; border-bottom: 1px solid #222; }
.c.active { margin: -1px 0 0 -1px; border: 3px solid #1a1a1a; position: relative; z-index: 2; background: #fff; }
.c.active::after { content: ""; position: absolute; right: -4px; bottom: -4px; width: 4px; height: 4px; background: #111; }
.spinner { position: absolute; left: 237px; top: 278px; width: 16px; height: 16px; border: 4px solid #2b8fe0; border-radius: 50%; z-index: 3; }
.vscroll { width: 13px; flex: none; display: flex; flex-direction: column; align-items: stretch; background: #82a0cc; padding: 0 0 0 1px; }
.vs-split { height: 7px; margin: 1px 1px 0; background: #e7eef8; border: 1px solid #8ea8ca; display: block; }
.vs-up { height: 12px; display: flex; justify-content: center; align-items: center; }
.vs-up::after { content: ""; border: 4px solid transparent; border-bottom: 4px solid #3d5a8a; border-top: 0; }
.vs-thumb { height: 228px; display: flex; align-items: center; justify-content: center; background: linear-gradient(90deg, #eef1f8, #ced5e6); border: 1px solid #4e6d9e; }
.vs-thumb i { width: 7px; height: 5px; border-top: 1px solid #888; border-bottom: 1px solid #888; display: block; }
.vs-track { flex: 1; background: #88a6d2; }

.sheetbar { height: 14px; flex: none; display: flex; align-items: center; background: linear-gradient(#bcd3ef, #abc6e8); color: #3c5a85; font-size: 9.100px; position: relative; border-top: 1px solid #94aecd; }
.nav { width: 50px; padding-left: 1px; display: flex; font-size: 7px; color: #1f3a6b; flex: none; }
.nav span { display: block; width: 11.500px; text-align: center; }
.stab { display: block; text-align: center; line-height: 12px; flex: none; height: 13px; position: relative; }
.stab::after { content: ""; position: absolute; right: 2px; top: 0; width: 1px; height: 13px; background: #8fa9c9; transform: skewX(-38deg); }
.s-wd { width: 65px; }
.s-we { width: 69px; }
.s-ex { width: 65px; font-size: 9.800px; font-weight: 700; color: #222f42; background: linear-gradient(#fff, #e6eef9); clip-path: polygon(0 100%, 0 0, 100% 0, calc(100% - 8px) 100%); }
.s-ex::after { display: none; }
.s-ne { width: 28px; }
.s-li { width: 68px; }
.s-fe { width: 35px; }
.s-wa { width: 39px; }
.s-se { width: 39px; }
.s-ac { width: 74px; }
.s-add { width: 28px; display: flex; align-items: center; justify-content: center; padding-right: 4px; }
.s-add::after { right: 0; }
.hscroll { flex: 1; display: flex; align-items: center; padding-left: 83px; height: 100%; }
.hs-split { width: 4px; height: 11px; background: #eef3fa; display: block; border: 1px solid #8fa9c9; flex: none; }
.hs-arrow { width: 15px; text-align: center; font-size: 7px; color: #3d5a8a; flex: none; }
.hs-arrow.right { width: 113px; text-align: right; padding-right: 2px; }
.hs-thumb { width: 290px; height: 13px; display: flex; align-items: center; justify-content: center; background: linear-gradient(#f2f4f9, #cbd4e4); border: 1px solid #6e8bb4; border-radius: 1px; flex: none; }
.hs-thumb i { width: 5px; height: 6px; border-left: 1px solid #888; border-right: 1px solid #888; display: block; }

.status { height: 16px; flex: none; display: flex; align-items: center; padding-left: 5px; background: linear-gradient(#d8e6f8, #b5cdea); font-size: 9px; color: #2f4a75; }
.ready { width: 32px; border-right: 1px solid #a3bcda; height: 16px; line-height: 15px; display: block; }
.macro { margin-left: 7px; }
.st-sep { width: 1px; height: 16px; margin-left: 7px; background: #a3bcda; display: block; }
.st-right { margin-left: auto; width: 195px; height: 16px; display: flex; align-items: center; background: linear-gradient(#b7cce9, #9dbadf); border-left: 1px solid #7f9cc4; padding-left: 5px; }
.views { display: flex; gap: 1px; }
.views span { width: 14px; height: 14px; display: flex; align-items: center; justify-content: center; background: #d4e0f0; border: 1px solid #9cb2cf; }
.views span.on { background: linear-gradient(#fde3a8, #f9c566); }
.pct190 { margin-left: 6px; width: 30px; color: #23406f; font-size: 8.500px; }
.zoomb { width: 11px; height: 11px; border-radius: 50%; display: flex; align-items: center; justify-content: center; border: 1px solid #6f86a8; background: #e9eef7; font-size: 9px; line-height: 9px; color: #333; flex: none; }
.slider { width: 82px; height: 1px; margin: 0 1px; background: #d8e3f2; position: relative; display: block; }
.tick { position: absolute; left: 41px; top: -3px; width: 1px; height: 7px; background: #7f93b0; }
.knob { position: absolute; left: 48px; top: -5px; width: 6px; height: 11px; background: #e9eef7; border: 1px solid #6f86a8; }

.itask { height: 32px; flex: none; display: flex; background: #d4e4f1; color: #222; position: relative; }
.start { width: 39px; display: flex; align-items: center; justify-content: center; }
.isearch { width: 272px; background: #fff; display: flex; align-items: center; gap: 8px; padding: 2px 0 0 9px; font-size: 11.100px; color: #333; border-bottom: 1px solid #999; }
.iapps { display: flex; }
.ia { width: 38.700px; height: 32px; display: flex; align-items: center; justify-content: center; flex: none; position: relative; left: 1px; }
.ia.tvi { left: -1px; }
.ink { color: #111; }
.ia.run::after { content: ""; position: absolute; left: 4px; right: 4px; bottom: 0; height: 2px; background: #2b8fd8; }
.ia.cur { background: #eaf1f7; }
.ia.cur::after { left: 0; right: 0; }
.itray { position: absolute; left: 743px; top: 0; width: 340px; height: 32px; display: flex; align-items: center; color: #222; }
.itray .p { margin-right: 32px; }
.sun { width: 15px; height: 15px; border-radius: 50%; background: radial-gradient(circle at 50% 40%, #ffd65a, #f3a81e); flex: none; margin-right: 9px; }
.temp { font-size: 10px; width: 27px; margin-right: 7px; }
.chev { margin-right: 12px; }
.m1 { margin-right: 8px; }
.m2 { margin-right: 7px; }
.m3 { margin-right: 6px; }
.m4 { margin-right: 7px; }
.m5 { margin-right: 9px; }
.m6 { margin-right: 4px; }
.iclock { display: flex; flex-direction: column; align-items: center; width: 60px; font-size: 8.500px; line-height: 13px; color: #333; margin-top: -2px; }
.inotif { position: relative; margin-left: 5px; display: block; color: #111; }
.inotif b { position: absolute; left: 5px; top: 6px; width: 14px; height: 14px; border-radius: 50%; background: #c5ced6; border: 1px solid #666; font: 700 8px/12px "Liberation Sans", sans-serif; color: #222; text-align: center; }

.taskbar { height: 40px; flex: none; display: flex; align-items: center; background: #0a0a0a; position: relative; padding-left: 14px; }
.app { width: 49px; height: 40px; flex: none; display: flex; align-items: center; justify-content: center; color: #eee; position: relative; }
.app.tv { margin-right: 2px; }
.app.run::after { content: ""; position: absolute; left: 4px; right: 4px; bottom: 0; height: 2px; background: #9fd2f3; }
.app.cur { background: #333; }
.app.cur::after { left: 0; right: 0; }
.tray { position: absolute; left: 1006px; top: 0; width: 275px; height: 40px; display: flex; align-items: center; color: #eee; }
.t-p { margin-right: 20px; }
.t-c { margin-right: 11px; }
.t-w { margin-right: 5px; }
.t-b { margin-right: 6px; }
.t-s { margin-right: 6px; }
.t-k { margin-right: 7px; }
.clock { display: flex; flex-direction: column; align-items: center; width: 60px; font-size: 11px; line-height: 19px; color: #eee; }
.notif { position: relative; margin-left: 14px; color: #fff; display: block; }
.notif b { position: absolute; left: 8px; top: 8px; width: 17px; height: 17px; border-radius: 50%; background: #333; border: 1px solid #888; font: 700 10px/15px "Liberation Sans", sans-serif; color: #eee; text-align: center; }
.edge-line { position: absolute; left: 1281px; top: 0; width: 1px; height: 40px; background: #555; }
```
